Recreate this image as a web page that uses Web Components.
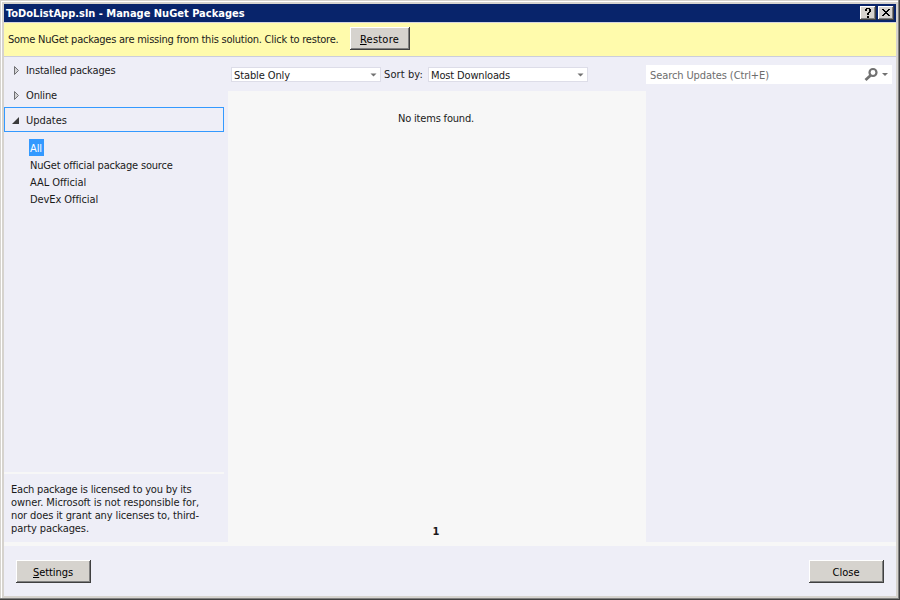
<!DOCTYPE html>
<html lang="en">
<head>
<meta charset="utf-8">
<title>Manage NuGet Packages</title>
<style>
html,body{margin:0;height:100%;overflow:hidden}
body{font:11px/13px "DejaVu Sans Condensed","DejaVu Sans",sans-serif;font-stretch:condensed;color:#1a1a1a}
</style>
</head>
<body>
<nuget-dialog></nuget-dialog>
<script>
function define(name, html, ready) {
  const t = document.createElement('template');
  t.innerHTML = html;
  customElements.define(name, class extends HTMLElement {
    connectedCallback() {
      if (this.shadowRoot) return;
      this.attachShadow({ mode: 'open' }).append(t.content.cloneNode(true));
      if (ready) ready(this, this.shadowRoot);
    }
  });
}

/* A single line of text, spaced to fill the width in its "w" attribute. */
define('ui-text', `<style>:host{display:block;white-space:nowrap;width:max-content}span{display:inline-block}</style><span><slot></slot></span>`,
  (host, root) => {
    const want = +host.getAttribute('w'), span = root.querySelector('span');
    const n = host.textContent.length;
    if (want && n > 1) {
      const gap = (want - span.getBoundingClientRect().width) / n;
      span.style.letterSpacing = gap.toFixed(3) + 'px';
    }
  });

define('classic-button', `<style>
:host{display:flex;box-sizing:border-box;width:75px;height:23px;align-items:center;justify-content:center;background:#d6d3ce;color:#000;
box-shadow:inset -1px -1px #404040,inset 1px 1px #fff,inset -2px -2px #808080;padding:1px 1px 0 0}
:host([compact]){width:60px}
</style><slot></slot>`);

define('caption-button', `<style>
:host{display:block;width:16px;height:14px;background:#d6d3ce;box-shadow:inset -1px -1px #404040,inset 1px 1px #fff,inset -2px -2px #808080}
svg{display:block}.x{display:none}:host([kind=close]) .x{display:inline}:host([kind=close]) .q{display:none}
</style><svg width="16" height="14" shape-rendering="crispEdges" fill="#000">
<path class="q" d="M6 2h4v1h-4zM5 3h2v2h-2zM9 3h2v3h-2zM8 6h2v1h-2zM7 7h2v2h-2zM7 10h2v2h-2z"/>
<path class="x" d="M4 3h2v1h-2zM10 3h2v1h-2zM5 4h2v1h-2zM9 4h2v1h-2zM6 5h4v1h-4zM7 6h2v1h-2zM6 7h4v1h-4zM5 8h2v1h-2zM9 8h2v1h-2zM4 9h2v1h-2zM10 9h2v1h-2z"/></svg>`);

define('title-bar', `<style>
:host{display:flex;flex:none;height:18px;background:#08246b;color:#fff;align-items:center;gap:2px;padding:0 2px;font-weight:bold;border-bottom:1px solid #d5d5df}
ui-text{margin-right:auto}
</style><ui-text w="240"><slot></slot></ui-text><caption-button></caption-button><caption-button kind="close"></caption-button>`,
  (host, root) => { const t = root.querySelector('ui-text'); t.textContent = host.textContent; });

define('restore-bar', `<style>
:host{display:flex;flex:none;height:33px;background:#fffbac;border-bottom:1px solid #cccedb;box-sizing:content-box;padding-left:4px}
ui-text{margin-top:10px;width:342px}classic-button{margin-top:4px}
</style><ui-text w="330.500">Some NuGet packages are missing from this solution. Click to restore.</ui-text>
<classic-button compact><ui-text w="39" style="margin:0;width:auto"><u>R</u>estore</ui-text></classic-button>`);

define('tree-group', `<style>
:host{display:flex;box-sizing:border-box;width:220px;height:25px;align-items:center;padding:1px 0 0 7px;border:1px solid transparent}
:host([open]){border-color:#3399ff}
svg{width:14px;height:13px;flex:none}.o{display:none}:host([open]) .o{display:inline}:host([open]) .c{display:none}
</style><svg viewBox="0 0 14 13"><path class="c" d="M2.500 2.500v8l4-4z" fill="#d2d2d4" stroke="#707073"/><path class="o" d="M7 3v7H0z" fill="#3c3c3c"/></svg><slot></slot>`);

define('source-item', `<style>
:host{display:flex;box-sizing:border-box;width:max-content;height:17px;align-items:center;padding:2px 1px 0}
:host([selected]){background:#3399ff;color:#fff;width:15px}
</style><slot></slot>`);

define('source-nav', `<style>
:host{display:flex;flex-direction:column;width:224px;height:485px;background:#eeeef7}
.list{padding:7px 0 0 25px}
.note{margin-top:auto;width:220px;height:70px;box-sizing:border-box;border-top:2px solid #f7f7f7;padding:9px 0 0 7px}
</style>
<tree-group><ui-text w="89.500">Installed packages</ui-text></tree-group>
<tree-group><ui-text w="31">Online</ui-text></tree-group>
<tree-group open><ui-text w="41">Updates</ui-text></tree-group>
<div class="list">
<source-item selected><ui-text w="12">All</ui-text></source-item>
<source-item><ui-text w="142.500">NuGet official package source</ui-text></source-item>
<source-item><ui-text w="56">AAL Official</ui-text></source-item>
<source-item><ui-text w="68">DevEx Official</ui-text></source-item>
</div>
<div class="note">
<ui-text w="180.500">Each package is licensed to you by its</ui-text>
<ui-text w="188">owner. Microsoft is not responsible for,</ui-text>
<ui-text w="188">nor does it grant any licenses to, third-</ui-text>
<ui-text w="78">party packages.</ui-text>
</div>`);

define('combo-box', `<style>
:host{display:flex;box-sizing:border-box;height:15px;background:#fff;border:1px solid #dddde8;align-items:center;justify-content:space-between;padding:1px 3px 0 2px}
svg{display:block}
</style><slot></slot><svg width="7" height="4"><path d="M.5.5h6L3.500 3.500z" fill="#717171"/></svg>`);

define('package-list', `<style>
:host{display:flex;flex-direction:column;width:418px}
.bar{display:flex;height:34px;padding:10px 0 0 3px;box-sizing:border-box}
.sort{margin:1px 0 0 3px;width:44px}
.items{flex:1;background:#f7f7f7;display:flex;flex-direction:column;justify-content:space-between;align-items:center;padding:21px 2px 4px 0}
.page{font-weight:bold}
</style>
<div class="bar"><combo-box style="width:150px"><ui-text w="56">Stable Only</ui-text></combo-box>
<ui-text class="sort" w="39">Sort by:</ui-text>
<combo-box style="width:160px"><ui-text w="79">Most Downloads</ui-text></combo-box></div>
<div class="items"><ui-text w="76">No items found.</ui-text><ui-text class="page" w="7">1</ui-text></div>`);

define('search-box', `<style>
:host{display:flex;box-sizing:border-box;width:246px;height:19px;background:#fff;color:#6d6d6d;margin-top:8px;padding:0 3px 0 4px;align-items:center}
ui-text{margin:1px auto 0 0}svg{display:block}
</style><ui-text w="119">Search Updates (Ctrl+E)</ui-text>
<svg width="25" height="19"><circle cx="9" cy="7.500" r="3.500" fill="none" stroke="#717171" stroke-width="2.200"/><path d="M6.500 10.500L1.500 15" stroke="#717171" stroke-width="2.800"/><path d="M18 8h6l-3 3z" fill="#717171"/></svg>`);

define('nuget-dialog', `<style>
:host{display:flex;flex-direction:column;box-sizing:border-box;width:900px;height:600px;padding:4px;background:#eeeef7;
box-shadow:inset -1px -1px #404040,inset -2px -2px #808080,inset 1px 1px #d6d3ce,inset 2px 2px #fff,inset 0 0 0 4px #d6d3ce}
.main{display:flex;flex:none;height:485px}
.foot{flex:1;border-top:4px solid #f7f7f7;display:flex;justify-content:space-between;padding:14px 12px 0}
</style>
<title-bar>ToDoListApp.sln - Manage NuGet Packages</title-bar>
<restore-bar></restore-bar>
<div class="main"><source-nav></source-nav><package-list></package-list><search-box></search-box></div>
<div class="foot"><classic-button><ui-text w="40"><u>S</u>ettings</ui-text></classic-button><classic-button><ui-text w="27">Close</ui-text></classic-button></div>`);
</script>
</body>
</html>
